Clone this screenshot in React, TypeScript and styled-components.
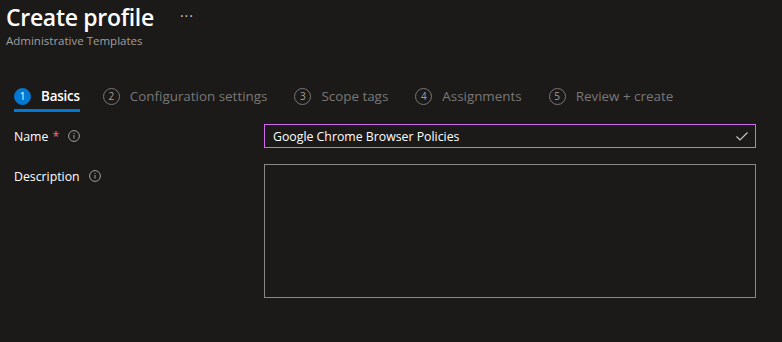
import styled, { createGlobalStyle } from 'styled-components';

const GlobalStyle = createGlobalStyle`
  html, body {
    margin: 0;
    background: #1b1a19;
    font-family: 'Open Sans', 'Liberation Sans', sans-serif;
    color: #ffffff;
  }
`;

const Page = styled.div`
  width: 782px;
  height: 342px;
  background: #1b1a19;
  overflow: hidden;
`;

const Header = styled.div`
  padding: 0 0 0 6px;
`;

const TitleRow = styled.div`
  display: flex;
  align-items: center;
  height: 34px;
`;

const Title = styled.h1`
  margin: 0;
  font-size: 23px;
  font-weight: 600;
  letter-spacing: -0.3px;
  color: #ffffff;
`;

const More = styled.span`
  margin-left: 26px;
  margin-top: -3px;
  font-size: 14px;
  color: #c8c6c4;
  letter-spacing: 1px;
`;

const Subtitle = styled.div`
  font-size: 11.5px;
  color: #a19f9d;
  margin-top: -1px;
`;

const Steps = styled.nav`
  display: flex;
  align-items: flex-start;
  gap: 27px;
  padding: 0 14px;
  margin-top: 36px;
`;

const Step = styled.div<{ $active?: boolean }>`
  display: flex;
  align-items: center;
  gap: 10px;
  height: 24px;
  padding-bottom: 1px;
  border-bottom: 3px solid ${(p) => (p.$active ? '#0078d4' : 'transparent')};
  font-size: 13.4px;
  font-weight: ${(p) => (p.$active ? 600 : 400)};
  letter-spacing: ${(p) => (p.$active ? '-0.2px' : '0')};
  color: ${(p) => (p.$active ? '#ffffff' : '#797775')};
  &:first-child {
    margin-right: -4px;
  }
`;

const StepNum = styled.span<{ $active?: boolean }>`
  width: 17px;
  height: 17px;
  box-sizing: border-box;
  border-radius: 50%;
  display: flex;
  align-items: center;
  justify-content: center;
  font-size: 10px;
  font-weight: 400;
  letter-spacing: 0;
  background: ${(p) => (p.$active ? '#0078d4' : 'transparent')};
  border: 1px solid ${(p) => (p.$active ? '#0078d4' : '#797775')};
  color: ${(p) => (p.$active ? '#ffffff' : '#a19f9d')};
`;

const Form = styled.div`
  display: flex;
  flex-direction: column;
  gap: 16px;
  padding: 0 26px 0 14px;
  margin-top: 12px;
`;

const Row = styled.div`
  display: grid;
  grid-template-columns: 250px 1fr;
  align-items: start;
`;

const Label = styled.label`
  display: flex;
  align-items: center;
  height: 24px;
  font-size: 12.3px;
  color: #ffffff;
`;

const Required = styled.span`
  color: #f1707b;
  margin-left: 4px;
`;

const Info = styled.span`
  display: inline-flex;
  margin-left: 9px;
  color: #a19f9d;
`;

const Input = styled.div`
  display: flex;
  align-items: center;
  justify-content: space-between;
  height: 24px;
  box-sizing: border-box;
  border: 1px solid #d069f0;
  padding: 0 6px 0 8px;
  font-size: 12.3px;
  color: #ffffff;
`;

const TextArea = styled.div`
  height: 134px;
  box-sizing: border-box;
  border: 1px solid #8a8886;
`;

const InfoIcon = () => (
  <Info>
    <svg width="12" height="12" viewBox="0 0 12 12" fill="none">
      <circle cx="6" cy="6" r="5.4" stroke="currentColor" strokeWidth="1" />
      <rect x="5.5" y="5" width="1" height="3.6" fill="currentColor" />
      <rect x="5.5" y="3" width="1" height="1" fill="currentColor" />
    </svg>
  </Info>
);

const steps = ['Basics', 'Configuration settings', 'Scope tags', 'Assignments', 'Review + create'];

const App = () => {
  return (
    <Page>
      <GlobalStyle />
      <Header>
        <TitleRow>
          <Title>Create profile</Title>
          <More>···</More>
        </TitleRow>
        <Subtitle>Administrative Templates</Subtitle>
      </Header>
      <Steps>
        {steps.map((s, i) => (
          <Step key={s} $active={i === 0}>
            <StepNum $active={i === 0}>{i + 1}</StepNum>
            {s}
          </Step>
        ))}
      </Steps>
      <Form>
        <Row>
          <Label>
            Name<Required>*</Required>
            <InfoIcon />
          </Label>
          <Input>
            Google Chrome Browser Policies
            <svg width="14" height="14" viewBox="0 0 14 14" fill="none">
              <path d="M1.5 7.5 L5 11 L12.5 3.5" stroke="#c8c6c4" strokeWidth="1.2" />
            </svg>
          </Input>
        </Row>
        <Row>
          <Label>
            Description
            <InfoIcon />
          </Label>
          <TextArea />
        </Row>
      </Form>
    </Page>
  );
};

export default App;
